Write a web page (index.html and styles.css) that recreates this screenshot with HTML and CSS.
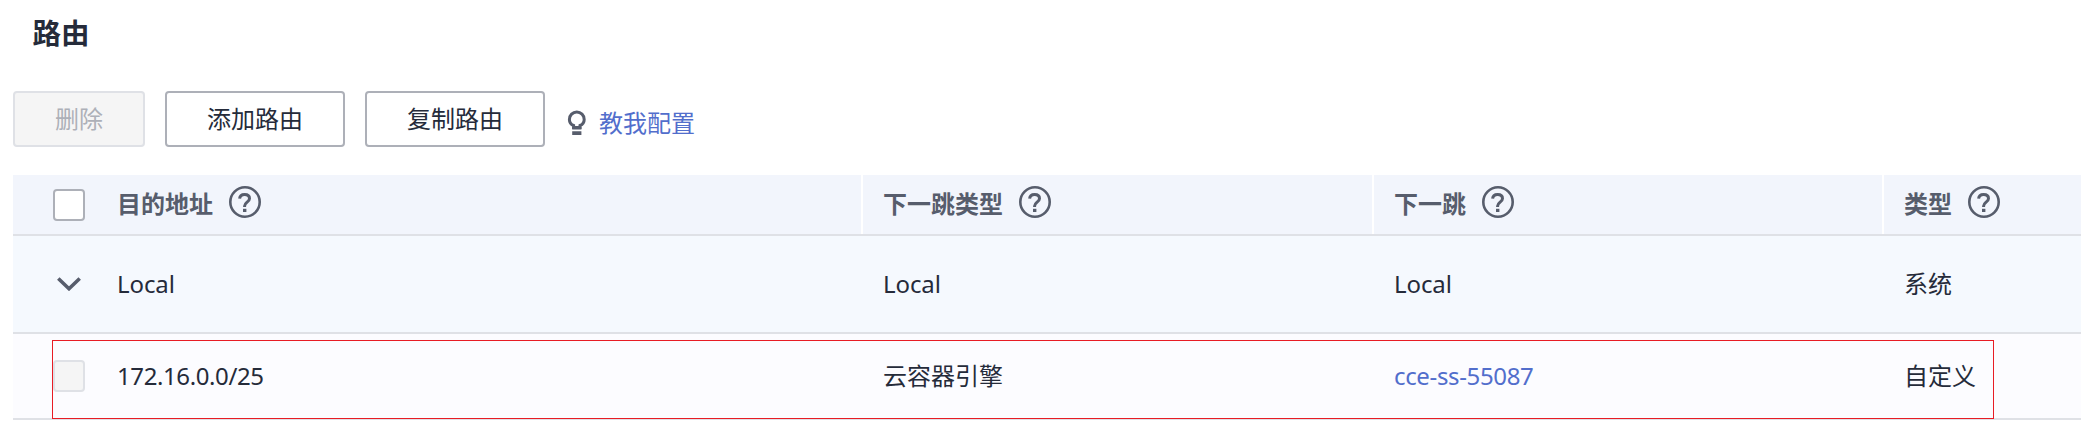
FILE: index.html
```html
<!DOCTYPE html>
<html lang="zh-CN">
<head>
<meta charset="utf-8">
<title>路由</title>
<link rel="stylesheet" href="styles.css">
</head>
<body>
<svg class="defs" width="0" height="0">
  <symbol id="help" viewBox="0 0 32 32">
    <circle cx="16" cy="16" r="14.7" fill="none" stroke="currentColor" stroke-width="2.6"/>
    <path d="M10.6 12.7c.2-2.7 2.1-4.3 5-4.3 3 0 4.900 1.500 4.900 4 0 3.600-4.900 3.900-4.900 7.600v1" fill="none" stroke="currentColor" stroke-width="3"/>
    <rect x="14" y="22.8" width="3.4" height="3.2" fill="currentColor"/>
  </symbol>
</svg>
<h1 class="title">路由</h1>
<div class="toolbar">
  <button class="btn btn-disabled" disabled>删除</button>
  <button class="btn">添加路由</button>
  <button class="btn">复制路由</button>
  <a class="guide">
    <svg class="bulb" viewBox="0 0 20 26"><path d="M6.6 17.4v-1.9C3.8 14.3 2.4 12.2 2.4 9.4a7.4 7.4 0 0 1 14.8 0c0 2.8-1.4 4.9-4.2 6.1v1.9z" fill="none" stroke="currentColor" stroke-width="3"/><path d="M5.2 15.900h9.200v3.600H5.200zM5.200 21.300h9.200v3.600H5.200z" fill="currentColor"/></svg>
    <span>教我配置</span>
  </a>
</div>
<div class="table">
  <div class="row head">
    <div class="cell pick"><span class="check"></span></div>
    <div class="cell">目的地址<svg class="help"><use href="#help"/></svg></div>
    <div class="cell">下一跳类型<svg class="help"><use href="#help"/></svg></div>
    <div class="cell">下一跳<svg class="help"><use href="#help"/></svg></div>
    <div class="cell">类型<svg class="help"><use href="#help"/></svg></div>
  </div>
  <div class="row system">
    <div class="cell pick"><svg class="chevron" viewBox="0 0 24 14"><path d="M1.3 1.5 12 11.7 22.7 1.5" fill="none" stroke="currentColor" stroke-width="3.6"/></svg></div>
    <div class="cell">Local</div>
    <div class="cell">Local</div>
    <div class="cell">Local</div>
    <div class="cell">系统</div>
  </div>
  <div class="row custom">
    <div class="cell pick"><span class="check check-disabled"></span></div>
    <div class="cell num">172.16.0.0/25</div>
    <div class="cell">云容器引擎</div>
    <div class="cell"><a class="link">cce-ss-55087</a></div>
    <div class="cell">自定义</div>
    <div class="highlight"></div>
  </div>
</div>
</body>
</html>
```
FILE: styles.css
```css
* { box-sizing: border-box; }
body {
  margin: 0;
  height: 442px;
  overflow: hidden;
  background: #fff;
  color: #252b3a;
  font: 24px/36px "Noto Sans", "Noto Sans CJK SC", sans-serif;
}
.defs { position: absolute; }
.title {
  margin: 0;
  padding: 13px 0 0 32.5px;
  height: 91px;
  font-size: 28.5px;
  line-height: 40px;
  font-weight: 700;
}
.toolbar {
  display: flex;
  gap: 20px;
  height: 84px;
  padding-left: 13px;
}
.btn {
  width: 180px;
  height: 56px;
  padding: 0;
  border: 2px solid #adb0b8;
  border-radius: 4px;
  background: #fff;
  color: #252b3a;
  font: inherit;
}
.btn-disabled {
  width: 132px;
  border-color: #dfe1e6;
  background: #f5f5f5;
  color: #adb0b8;
}
.guide {
  display: flex;
  align-items: center;
  height: 56px;
  padding-top: 8px;
  margin-left: 2px;
  color: #526ecc;
}
.bulb {
  width: 20px;
  height: 26px;
  margin-right: 12px;
  color: #575d6c;
}
.table { margin-left: 13px; }
.row {
  position: relative;
  display: grid;
  grid-template-columns: 82px 766px 511px 510px 1fr;
  border-bottom: 2px solid #dfe1e6;
}
.cell {
  display: flex;
  align-items: center;
  padding-left: 22px;
}
.system .cell { letter-spacing: -0.1px; }
.num { letter-spacing: -0.4px; }
.link { letter-spacing: -0.35px; color: #526ecc; }
.pick { padding-left: 40px; }
.head {
  height: 61px;
  background: #f2f5fc;
  color: #575d6c;
  font-weight: 700;
}
.head .cell { padding-bottom: 2px; }
.head .pick { padding-bottom: 0; }
.head .cell + .cell + .cell { box-shadow: inset 2px 0 #fff; }
.help {
  width: 32px;
  height: 32px;
  margin: -3px 0 0 16px;
}
.system { height: 98px; background: #f5f9fe; }
.custom { height: 86px; background: #fcfcff; }
.check {
  width: 32px;
  height: 32px;
  border: 2px solid #adb0b8;
  border-radius: 4px;
  background: #fff;
}
.check-disabled { border-color: #dfe1e6; background: #f5f5f5; }
.chevron {
  width: 24px;
  height: 14px;
  margin-left: 4px;
  color: #575d6c;
}
.highlight {
  position: absolute;
  left: 39px;
  top: 6px;
  width: 1942px;
  height: 79px;
  border: 1px solid #e81c24;
}
```
